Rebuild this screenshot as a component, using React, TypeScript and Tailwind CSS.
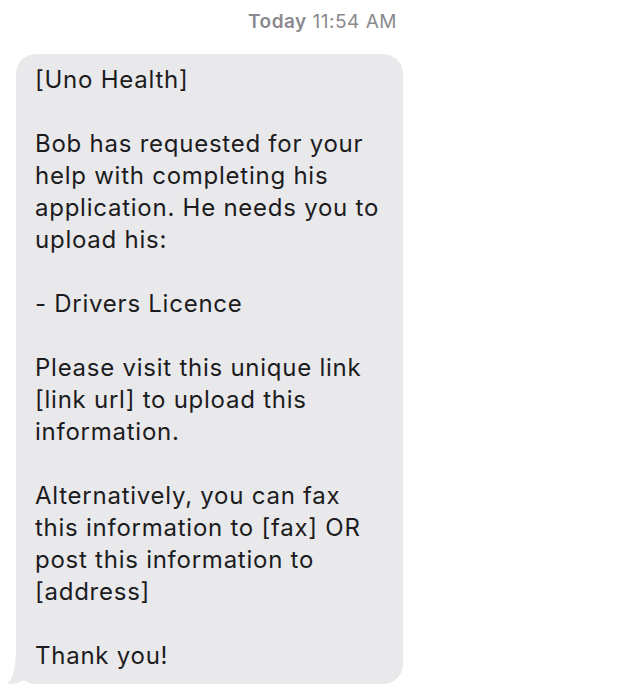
const lines = [
  "[Uno Health]",
  "",
  "Bob has requested for your",
  "help with completing his",
  "application. He needs you to",
  "upload his:",
  "",
  "- Drivers Licence",
  "",
  "Please visit this unique link",
  "[link url] to upload this",
  "information.",
  "",
  "Alternatively, you can fax",
  "this information to [fax] OR",
  "post this information to",
  "[address]",
  "",
  "Thank you!",
];

export default function App() {
  return (
    <div
      className="w-[638px] h-[696px] bg-white overflow-hidden"
      style={{ fontFamily: "Inter, 'Noto Sans', sans-serif" }}
    >
      <div className="pt-[11px] pl-[7px] text-center text-[19px] leading-[22px] tracking-[0.5px] text-[#8a8a8e]">
        <span className="font-semibold">Today</span> 11:54 AM
      </div>

      <div className="relative mt-[21px] ml-[16px] w-[387px] rounded-[20px] bg-[#e9e9eb] pl-[19px] pt-[10px] pb-[12px]">
        {lines.map((line, i) => (
          <div
            key={i}
            className="h-[32px] text-[24px] leading-[32px] tracking-[0.75px] text-[#1c1c1e] whitespace-nowrap"
          >
            {line}
          </div>
        ))}
        <svg
          className="absolute left-[-9px] bottom-0"
          width="30"
          height="36"
          viewBox="0 0 30 36"
        >
          <path
            d="M9 0 C9 20 6 31 0 36 C6 36 12 35 17 32 C20 34 24 36 30 36 L30 0 Z"
            fill="#e9e9eb"
          />
        </svg>
      </div>
    </div>
  );
}
